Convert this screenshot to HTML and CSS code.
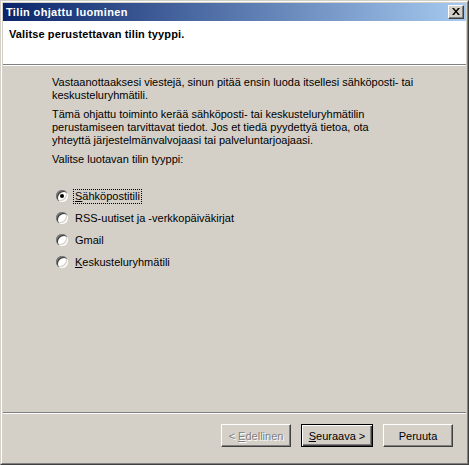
FILE: index.html
```html
<!DOCTYPE html>
<html lang="fi">
<head>
<meta charset="utf-8">
<title>Tilin ohjattu luominen</title>
<link rel="stylesheet" href="styles.css">
</head>
<body>
<div class="window">
  <div class="frame">
    <div class="titlebar">
      <span class="title">Tilin ohjattu luominen</span>
      <span class="close">
        <svg width="8" height="7" viewBox="0 0 8 7"><path d="M0 0h2l2 2.5L6 0h2L5 3.5 8 7H6L4 4.5 2 7H0l3-3.5z" fill="#000"/></svg>
      </span>
    </div>
    <div class="header">
      <div class="header-text">Valitse perustettavan tilin tyyppi.</div>
    </div>
    <div class="content">
      <p class="para">Vastaanottaaksesi viestejä, sinun pitää ensin luoda itsellesi sähköposti- tai<br>keskusteluryhmätili.</p>
      <p class="para">Tämä ohjattu toiminto kerää sähköposti- tai keskusteluryhmätilin<br>perustamiseen tarvittavat tiedot. Jos et tiedä pyydettyä tietoa, ota<br>yhteyttä järjestelmänvalvojaasi tai palveluntarjoajaasi.</p>
      <p class="para">Valitse luotavan tilin tyyppi:</p>
      <div class="radios">
        <div class="radio-row"><span class="radio checked"></span><span class="label focus"><u>S</u>ähköpostitili</span></div>
        <div class="radio-row"><span class="radio"></span><span class="label">RSS-uutiset ja -verkkopäiväkirjat</span></div>
        <div class="radio-row"><span class="radio"></span><span class="label">Gmail</span></div>
        <div class="radio-row"><span class="radio"></span><span class="label"><u>K</u>eskusteluryhmätili</span></div>
      </div>
    </div>
    <div class="footer">
      <button class="btn disabled">&lt; <u>E</u>dellinen</button>
      <button class="btn default"><u>S</u>euraava &gt;</button>
      <button class="btn">Peruuta</button>
    </div>
  </div>
</div>
</body>
</html>
```
FILE: styles.css
```css
* { box-sizing: border-box; }
html, body {
  margin: 0;
  padding: 0;
  width: 469px;
  height: 465px;
  overflow: hidden;
  background: #d4d0c8;
  font-family: "Liberation Sans", Arial, sans-serif;
  font-size: 11px;
  color: #000;
}
.window {
  width: 469px;
  height: 465px;
  border: 1px solid;
  border-color: #d4d0c8 #404040 #404040 #d4d0c8;
}
.frame {
  height: 100%;
  border: 1px solid;
  border-color: #fff #808080 #808080 #fff;
  padding: 1px;
  display: flex;
  flex-direction: column;
  background: #d4d0c8;
}
.titlebar {
  height: 18px;
  flex: none;
  background: linear-gradient(to right, #0a246a, #a6caf0);
  display: flex;
  align-items: center;
  justify-content: space-between;
  padding: 0 2px 0 3px;
}
.title {
  color: #fff;
  font-weight: bold;
  font-size: 11px;
  line-height: 13px;
  letter-spacing: 0.35px;
}
.close {
  width: 16px;
  height: 14px;
  background: #d4d0c8;
  border: 1px solid;
  border-color: #fff #404040 #404040 #fff;
  box-shadow: inset -1px -1px 0 #808080;
  display: flex;
  align-items: center;
  justify-content: center;
  padding-bottom: 1px;
}
.header {
  height: 44px;
  flex: none;
  background: #fff;
  border-bottom: 1px solid #808080;
  box-shadow: 0 1px 0 #fff;
  padding: 6px 0 0 6px;
}
.header-text {
  font-weight: bold;
  line-height: 14px;
  letter-spacing: 0.12px;
}
.content {
  flex: 1;
  margin-top: 1px;
  padding: 10px 0 0 49px;
  border-bottom: 1px solid #808080;
  box-shadow: 0 1px 0 #fff;
}
.para {
  margin: 0 0 6px 0;
  line-height: 13px;
  white-space: nowrap;
}
.para + .para + .para { margin-bottom: 0; }
.radios {
  margin-top: 19px;
  padding-left: 4px;
  display: flex;
  flex-direction: column;
}
.radio-row {
  height: 22px;
  display: flex;
  align-items: center;
  gap: 5px;
}
.radio {
  width: 12px;
  height: 12px;
  border-radius: 50%;
  background: #fff;
  box-shadow: inset 1px 1px 0 #808080, inset 2px 2px 0 #404040, inset -1px -1px 0 #fff, inset -2px -2px 0 #d4d0c8;
  position: relative;
  flex: none;
}
.radio.checked::after {
  content: "";
  position: absolute;
  left: 4px;
  top: 4px;
  width: 4px;
  height: 4px;
  border-radius: 50%;
  background: #000;
}
.label {
  line-height: 13px;
  padding: 0 1px;
  border: 1px solid transparent;
}
.label.focus {
  border: 1px dotted #000;
}
.footer {
  height: 48px;
  flex: none;
  margin-top: 1px;
  display: flex;
  justify-content: flex-end;
  align-items: flex-start;
  padding: 10px 13px 0 0;
  gap: 10px;
}
.btn {
  width: 70px;
  height: 23px;
  background: #d4d0c8;
  font-family: inherit;
  font-size: 11px;
  color: #000;
  border: 1px solid;
  border-color: #fff #404040 #404040 #fff;
  box-shadow: inset -1px -1px 0 #808080;
  padding: 0;
}
.btn.default {
  width: 72px;
  border: 1px solid #000;
  box-shadow: inset 1px 1px 0 #fff, inset -1px -1px 0 #404040, inset -2px -2px 0 #808080;
}
.btn.disabled {
  color: #808080;
  text-shadow: 1px 1px 0 #fff;
}
```
